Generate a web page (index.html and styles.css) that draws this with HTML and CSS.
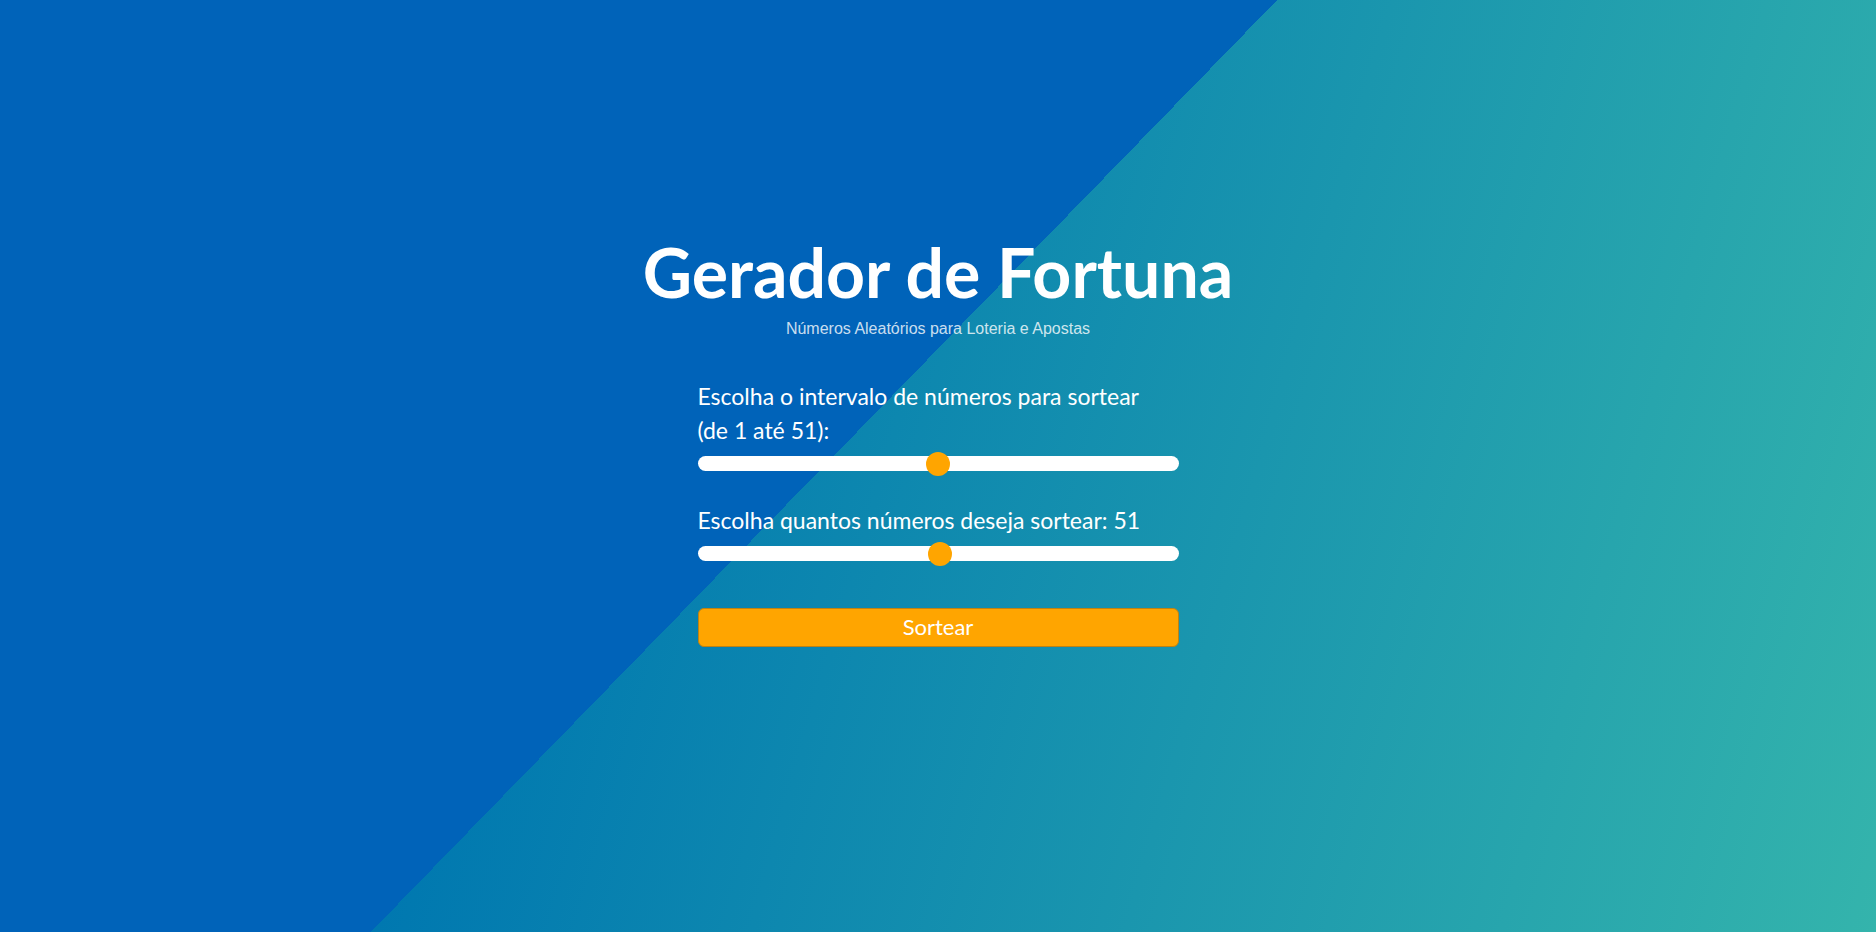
FILE: index.html
```html
<!DOCTYPE html>
<html lang="pt-BR">
<head>
<meta charset="utf-8">
<title>Gerador de Fortuna</title>
<link rel="stylesheet" href="styles.css">
</head>
<body>
<main class="app">
  <h1 class="title">Gerador de Fortuna</h1>
  <p class="subtitle">Números Aleatórios para Loteria e Apostas</p>
  <form class="panel">
    <label class="label" for="range">Escolha o intervalo de números para sortear (de 1 até 51):</label>
    <input class="slider" id="range" type="range" min="1" max="101" value="51">
    <label class="label label-second" for="count">Escolha quantos números deseja sortear: 51</label>
    <input class="slider" id="count" type="range" min="1" max="100" value="51">
    <button class="btn" type="button">Sortear</button>
  </form>
</main>
</body>
</html>
```

FILE: styles.css
```css
html, body {
  margin: 0;
  padding: 0;
  height: 100%;
}

body {
  background:
    linear-gradient(134.2deg, #0063b9 0, #0063b9 45.9%, transparent 45.9%),
    linear-gradient(106deg, #0062b8 0%, #0078b0 30%, #34b4ac 100%);
  font-family: "Lato", "Liberation Sans", sans-serif;
  color: #ffffff;
  overflow: hidden;
}

.app {
  display: flex;
  flex-direction: column;
  align-items: center;
  padding-top: 231px;
}

.title {
  margin: 0;
  font-family: "Lato", sans-serif;
  font-weight: 700;
  font-size: 68px;
  line-height: 1.2;
  letter-spacing: 0;
}

.subtitle {
  margin: 7px 0 0;
  font-family: "Liberation Sans", Arial, sans-serif;
  font-size: 16px;
  line-height: 18px;
  color: rgba(255, 255, 255, 0.8);
}

.panel {
  width: 481px;
  margin-top: 41px;
  display: flex;
  flex-direction: column;
}

.label {
  display: block;
  max-width: 465px;
  font-size: 23px;
  line-height: 34px;
  font-weight: 400;
}

.label-second {
  margin-top: 27px;
}

.slider {
  -webkit-appearance: none;
  appearance: none;
  display: block;
  width: 100%;
  height: 24px;
  margin: 5px 0 0;
  padding: 0;
  background: transparent;
}

.slider::-webkit-slider-runnable-track {
  height: 15px;
  border-radius: 8px;
  background: #ffffff;
}

.slider::-webkit-slider-thumb {
  -webkit-appearance: none;
  appearance: none;
  width: 24px;
  height: 24px;
  margin-top: -4.5px;
  border-radius: 50%;
  background: #ffa500;
  border: none;
}

.btn {
  margin-top: 42px;
  height: 39px;
  width: 100%;
  background: #ffa500;
  border: 1px solid #bf8212;
  border-radius: 6px;
  color: #ffffff;
  font-family: "Lato", sans-serif;
  font-size: 22px;
  line-height: 1;
  padding: 0;
}
```
